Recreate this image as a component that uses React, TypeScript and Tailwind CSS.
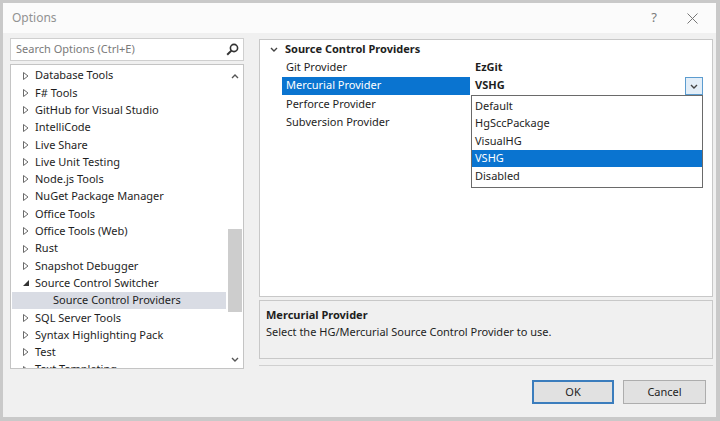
import React from "react";

const treeItems: { label: string; kind: "closed" | "open" | "child"; selected?: boolean }[] = [
  { label: "Database Tools", kind: "closed" },
  { label: "F# Tools", kind: "closed" },
  { label: "GitHub for Visual Studio", kind: "closed" },
  { label: "IntelliCode", kind: "closed" },
  { label: "Live Share", kind: "closed" },
  { label: "Live Unit Testing", kind: "closed" },
  { label: "Node.js Tools", kind: "closed" },
  { label: "NuGet Package Manager", kind: "closed" },
  { label: "Office Tools", kind: "closed" },
  { label: "Office Tools (Web)", kind: "closed" },
  { label: "Rust", kind: "closed" },
  { label: "Snapshot Debugger", kind: "closed" },
  { label: "Source Control Switcher", kind: "open" },
  { label: "Source Control Providers", kind: "child", selected: true },
  { label: "SQL Server Tools", kind: "closed" },
  { label: "Syntax Highlighting Pack", kind: "closed" },
  { label: "Test", kind: "closed" },
  { label: "Text Templating", kind: "closed" },
];

const props = [
  { label: "Git Provider", value: "EzGit" },
  { label: "Mercurial Provider", value: "VSHG", selected: true },
  { label: "Perforce Provider", value: "" },
  { label: "Subversion Provider", value: "" },
];

const options = ["Default", "HgSccPackage", "VisualHG", "VSHG", "Disabled"];

function Closed() {
  return (
    <svg width="6" height="8" viewBox="0 0 6 8" className="shrink-0">
      <path d="M0.5 0.5 L5 4 L0.5 7.5 Z" fill="none" stroke="#6b6b6b" strokeWidth="1" />
    </svg>
  );
}

function Open() {
  return (
    <svg width="6" height="6" viewBox="0 0 6 6" className="shrink-0">
      <path d="M6 0 L6 6 L0 6 Z" fill="#333" />
    </svg>
  );
}

function Chevron({ up, color = "#555" }: { up?: boolean; color?: string }) {
  return (
    <svg width="8" height="5" viewBox="0 0 8 5">
      <path d={up ? "M1 4 L4 1 L7 4" : "M1 1 L4 4 L7 1"} fill="none" stroke={color} strokeWidth="1.4" />
    </svg>
  );
}

export default function App() {
  return (
    <div
      className="h-[421px] w-[720px] overflow-hidden bg-[#c9c9c9] pb-[4px] pl-[3px] pr-[4px] pt-[3px] text-[11px] text-[#1e1e1e]"
      style={{ fontFamily: '"Noto Sans", "Open Sans", sans-serif' }}
    >
      <div className="flex h-full w-full flex-col bg-[#f0f0f0]">
        {/* title bar */}
        <div className="flex h-[30px] shrink-0 items-center justify-between bg-[#fbfbfb] pl-[9px] pr-[18px]">
          <span className="text-[12px] text-[#929292]">Options</span>
          <div className="flex items-center gap-[30px] text-[#7a7a7a]">
            <span className="text-[13px]">?</span>
            <svg width="11" height="11" viewBox="0 0 11 11">
              <path d="M0.5 0.5 L10.5 10.5 M10.5 0.5 L0.5 10.5" stroke="#777" strokeWidth="1" />
            </svg>
          </div>
        </div>

        {/* body */}
        <div className="flex h-[336px] shrink-0 pl-[7px] pr-[4px] pt-[5px]">
          {/* left column */}
          <div className="flex w-[234px] shrink-0 flex-col">
            <div className="flex h-[23px] items-center justify-between border border-[#cfcfcf] bg-white pl-[5px] pr-[4px]">
              <span className="text-[#7a7a7a]">Search Options (Ctrl+E)</span>
              <svg width="13" height="13" viewBox="0 0 13 13">
                <circle cx="8" cy="5" r="3.6" fill="none" stroke="#333" strokeWidth="1.6" />
                <path d="M5.4 7.6 L1.2 11.8" stroke="#333" strokeWidth="2" />
              </svg>
            </div>
            <div className="mt-[3px] flex h-[305px] border border-[#c4c4c4] bg-white">
              <div className="flex-1 overflow-hidden pl-[1px] pt-[2px]">
                {treeItems.map((it) => (
                  <div
                    key={it.label}
                    className={`flex h-[17.3px] items-center whitespace-nowrap ${
                      it.selected ? "bg-[#d9dce4]" : ""
                    }`}
                  >
                    {it.kind === "child" ? (
                      <span className="pl-[41px]">{it.label}</span>
                    ) : (
                      <>
                        <span className="flex w-[23px] justify-end pr-[6px]">
                          {it.kind === "open" ? <Open /> : <Closed />}
                        </span>
                        <span>{it.label}</span>
                      </>
                    )}
                  </div>
                ))}
              </div>
              <div className="flex w-[17px] shrink-0 flex-col items-center pb-[6px] pt-[9px]">
                <Chevron up />
                <div className="mt-[150px] h-[83px] w-[14px] bg-[#cdcdcd]" />
                <div className="flex-1" />
                <Chevron />
              </div>
            </div>
          </div>

          {/* right column */}
          <div className="ml-[15px] flex w-[454px] shrink-0 flex-col pt-[1px]">
            <div className="relative h-[258px] border border-[#c8c8c8] bg-white">
              <div className="flex h-[18.3px] items-center font-bold">
                <span className="flex w-[25px] justify-center pl-[2px]">
                  <Chevron color="#444" />
                </span>
                <span>Source Control Providers</span>
              </div>
              {props.map((p) => (
                <div key={p.label} className="flex h-[18.3px] items-stretch">
                  <div
                    className={`ml-[22px] flex w-[188px] items-center pl-[4px] ${
                      p.selected ? "bg-[#0a74d0] text-white" : ""
                    }`}
                  >
                    {p.label}
                  </div>
                  <div className="flex flex-1 items-center pl-[5px] font-bold">{p.value}</div>
                </div>
              ))}

              {/* dropdown button */}
              <div className="absolute left-[425px] top-[37px] flex h-[18px] w-[18px] items-center justify-center border border-[#5c9ccf] bg-[#e3eef8]">
                <Chevron color="#444" />
              </div>

              {/* open list */}
              <div className="absolute left-[211px] top-[55px] w-[232px] border border-[#6a6a6a] bg-white pb-[2px] pt-[1px]">
                {options.map((o) => (
                  <div
                    key={o}
                    className={`flex h-[17.5px] items-center pl-[3px] ${
                      o === "VSHG" ? "bg-[#0a74d0] text-white" : ""
                    }`}
                  >
                    {o}
                  </div>
                ))}
              </div>
            </div>

            <div className="mt-[3px] h-[59px] border border-[#c8c8c8] bg-[#f0f0f0] pl-[6px] pt-[5px]">
              <div className="font-bold leading-[17px]">Mercurial Provider</div>
              <div className="leading-[17px]">Select the HG/Mercurial Source Control Provider to use.</div>
            </div>
            <div className="mt-[6px] h-px bg-[#d0d0d0]" />
          </div>
        </div>

        {/* footer */}
        <div className="flex justify-end gap-[9px] pr-[10px] pt-[11px]">
          <button className="flex h-[24px] w-[82px] items-center justify-center border-2 border-[#3b7dbd] bg-[#e1e1e1] text-[#1e1e1e]">
            OK
          </button>
          <button className="flex h-[24px] w-[83px] items-center justify-center border border-[#adadad] bg-[#e1e1e1] text-[#1e1e1e]">
            Cancel
          </button>
        </div>
      </div>
    </div>
  );
}
